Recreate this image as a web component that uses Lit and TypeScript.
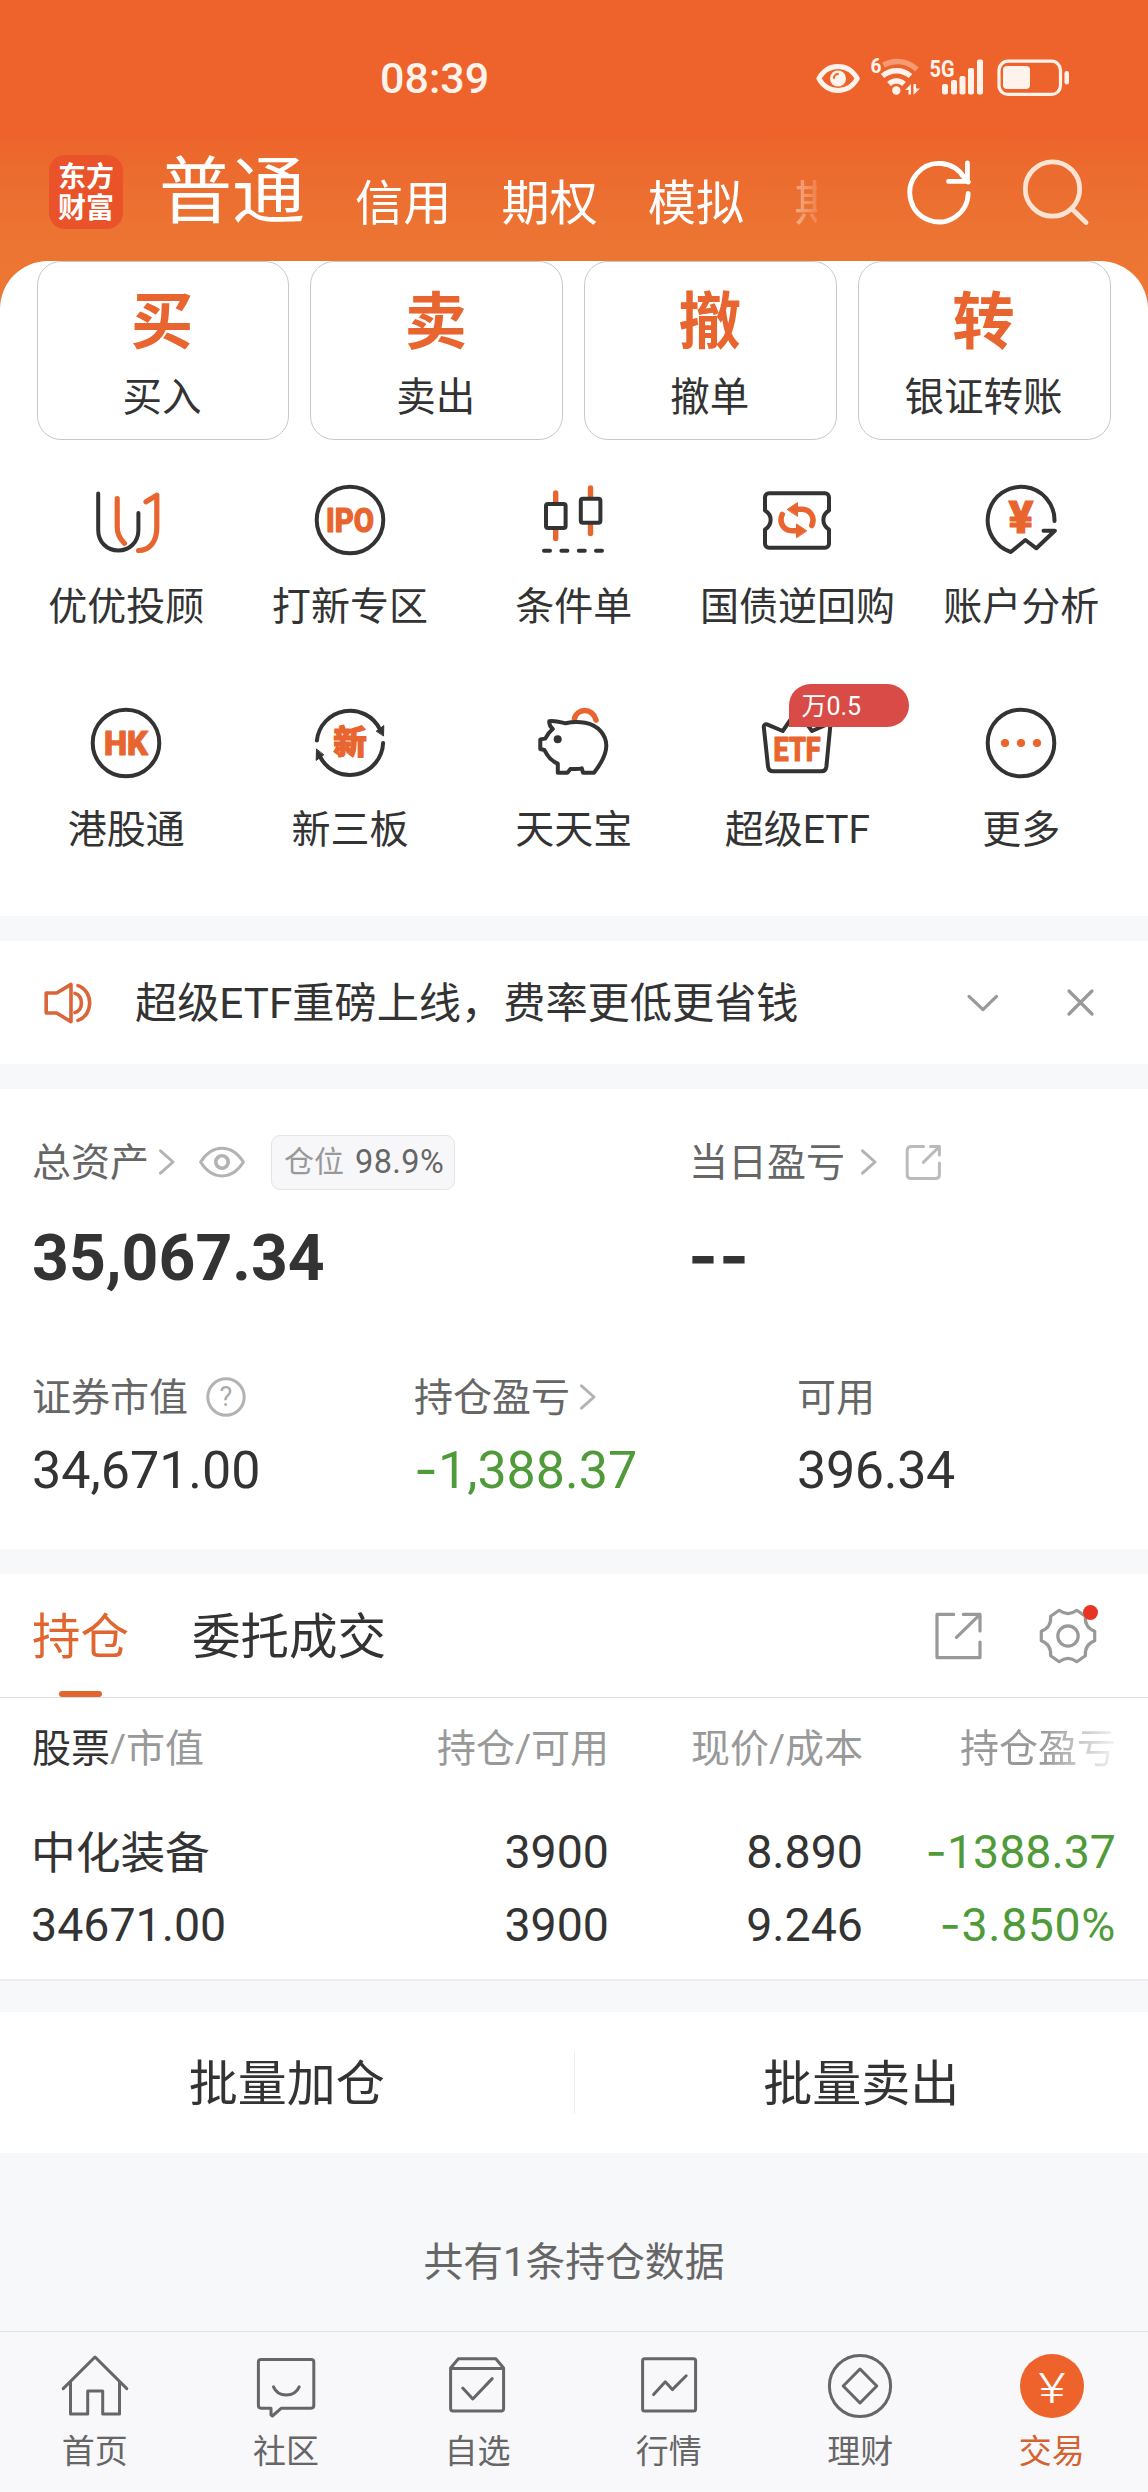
import { LitElement, html, svg, css, nothing } from "lit";
import { customElement, property } from "lit/decorators.js";
import { classMap } from "lit/directives/class-map.js";

const DARK = "#333";
const ORANGE = "#e9652f";
const ICON_FONT = `Roboto, "Noto Sans CJK SC", sans-serif`;

const glyph = (text: string, baseline: number, size: number, width: number, weight = 800, fill = ORANGE, edge = 1.2) => svg`
  <text x="36" y=${baseline} text-anchor="middle" font-family=${ICON_FONT} font-size=${size} stroke=${edge ? fill : "none"} stroke-width=${edge}
    font-weight=${weight} fill=${fill} textLength=${width} lengthAdjust="spacingAndGlyphs">${text}</text>`;

const icons: Record<string, unknown> = {
  advisor: svg`
    <path d="M8.2 9.5V46C8.2 58 17 66.5 28.3 66.5S48.4 58 48.4 46V29" stroke=${DARK}/>
    <path d="M27.2 14.5V43C27.2 50 30 55 34.5 59.3M56 17.8L66.8 11.2V44C66.8 57 60 66.5 48.6 66.5" stroke=${ORANGE} stroke-width="5.2"/>`,
  ipo: svg`<circle cx="36" cy="36" r="33.3" stroke=${DARK}/>${glyph("IPO", 47.6, 32.6, 48)}`,
  candles: svg`
    <path d="M17.7 9V18M17.7 46V54.5M52.5 4V13M52.5 41V49.5" stroke=${ORANGE} stroke-width="5.4"/>
    <rect x="8" y="20" width="19.6" height="24" rx="2" stroke=${DARK}/>
    <rect x="42.8" y="14.8" width="19.6" height="24" rx="2" stroke=${DARK}/>
    <path d="M6 66.7H12M23.4 66.7H29.4M40.8 66.7H46.8M58 66.7H64" stroke=${DARK}/>`,
  repo: svg`
    <path d="M8 9.3H64A4 4 0 0 1 68 13.3V26.5C60.5 31 60.5 41 68 45.5V59.7A4 4 0 0 1 64 63.7H8A4 4 0 0 1 4 59.7V45.5C11.5 41 11.5 31 4 26.5V13.3A4 4 0 0 1 8 9.3Z" stroke=${DARK}/>
    <g stroke=${ORANGE} stroke-width="5.6">
      <path d="M36 25.3H41C49 25.3 54.5 33 50.8 41.5"/><path d="M36 46.7H31C23 46.7 17.5 39 21.2 30.5"/>
    </g>
    <path d="M26.5 25.3L36.5 18.6V32ZM45.5 46.7L35.5 40V53.4Z" fill=${ORANGE} stroke=${ORANGE} stroke-width="1"/>`,
  account: svg`
    <path d="M69.5 37A33.4 33.4 0 1 0 25.8 68L40.4 56L51.4 64.3L69.8 46.7H58.5" stroke=${DARK}/>
    ${glyph("¥", 48.6, 43.5, 25)}`,
  hk: svg`<circle cx="36" cy="36" r="33.3" stroke=${DARK}/>${glyph("HK", 47.6, 32.6, 44)}`,
  neeq: svg`
    <path d="M2.9 33.5A33.3 33.3 0 0 1 66 22.5M69.1 36A33.3 33.3 0 0 1 6 49.5" stroke=${DARK}/>
    <path d="M62.5 24L69.8 18.6L69.5 28.6ZM9.5 48L2.2 53.4L2.5 42.4Z" fill=${DARK} stroke=${DARK} stroke-width="1"/>
    ${glyph("新", 47.4, 33, 33.5)}`,
  piggy: svg`
    <path d="M36.5 11.5C39 1.5 54 -.5 58 13" stroke=${ORANGE} stroke-width="5.6"/>
    <path d="M11.3 14.2C16 13 22 15 27.6 16.3C33 15 40 14.6 47 15.7C60 18 68.5 28 68.3 39C68.2 49 62 58 56 65.7H45L43.8 61.3C40 62.4 36 61.6 32.4 62L29.4 65.7H19.8V56.6C15 54.6 11.5 51.6 9 47.4L6.4 43L2.3 42V32.4L7.2 31.6C9 28 11 25 14.8 22C12.5 20 11 17.5 11.3 14.2Z" stroke=${DARK} fill="#fff"/>
    <circle cx="19.7" cy="32.3" r="4" fill=${DARK} stroke="none"/>`,
  etf: svg`
    <path d="M2.8 20A2.4 2.4 0 0 1 6 17.4L21.7 24L32.5 8.5Q36 4 39.5 8.5L51 24L66 17.4A2.4 2.4 0 0 1 69.2 20L65.4 59.5Q64.8 64.3 60.5 64.3H12.2Q7.6 64.3 7 59.5Z" stroke=${DARK}/>
    ${glyph("ETF", 54.2, 32.4, 47)}`,
  more: svg`<circle cx="36" cy="36" r="33.3" stroke=${DARK}/>
    <g fill=${ORANGE} stroke="none"><circle cx="20" cy="36" r="4.1"/><circle cx="36" cy="36" r="4.1"/><circle cx="52" cy="36" r="4.1"/></g>`,
  home: svg`<path d="M4.2 38.6L36 7L67.8 38.6M11.5 32V64H28.7V41H43.7V64H60.5V32"/>`,
  community: svg`<path d="M11 9.4H61.2Q63.8 9.4 63.8 12V55.6Q63.8 58.2 61.2 58.2H31.4L22.4 66L21 65V58.2H11Q8.4 58.2 8.4 55.6V12Q8.4 9.4 11 9.4Z"/><path d="M23.5 36.8C28 47.6 44.5 47.6 49.2 36.8"/>`,
  watch: svg`<path d="M9.6 18L17.4 8.8H54.8L62.6 18V58.6Q62.6 61 60.2 61H12Q9.6 61 9.6 58.6ZM9.6 18.4H62.6"/><path d="M21.7 38L31.8 49L51.2 28.6"/>`,
  market: svg`<rect x="9.6" y="8.8" width="53" height="52.2" rx="2"/><path d="M20.6 44.6L32.3 31.8L39.3 39.6L53.2 25.8"/>`,
  wealth: svg`<circle cx="36" cy="36" r="30.6"/><path d="M36 19L52.8 36L36 53L19.2 36Z"/>`,
  trade: svg`<circle cx="36" cy="36" r="32" fill="#ed632b" stroke="none"/>${glyph("¥", 52.6, 42, 27, 300, "#fff", 0)}`,
};

@customElement("line-icon")
class LineIcon extends LitElement {
  @property() name = "";
  @property({ type: Number }) stroke = 4;
  static styles = css`
    :host { display: block; width: 72px; height: 72px; }
    svg { display: block; width: 72px; height: 72px; overflow: visible; }
  `;
  render() {
    return html`<svg viewBox="0 0 72 72" fill="none" stroke="#666" stroke-width=${this.stroke}
      stroke-linecap="round" stroke-linejoin="round">${icons[this.name] ?? nothing}</svg>`;
  }
}

const tabs = ["信用", "期权", "模拟", "期货"];
const quick = [["买", "买入"], ["卖", "卖出"], ["撤", "撤单"], ["转", "银证转账"]];
const services: [string, string, string?][] = [
  ["advisor", "优优投顾"], ["ipo", "打新专区"], ["candles", "条件单"], ["repo", "国债逆回购"], ["account", "账户分析"],
  ["hk", "港股通"], ["neeq", "新三板"], ["piggy", "天天宝"], ["etf", "超级ETF", "万0.5"], ["more", "更多"],
];
const bottomNav = [["home", "首页"], ["community", "社区"], ["watch", "自选"], ["market", "行情"], ["wealth", "理财"], ["trade", "交易"]];

const chevron = (gap: string) => html`<svg class="chev ${gap}" width="16" height="26" viewBox="0 0 16 26"><path d="M1.5 1.8L14 13L1.5 24.2" /></svg>`;
const minus = (v: string) => html`<span class="neg">-</span>${v}`;

@customElement("app-root")
class AppRoot extends LitElement {
  static styles = css`
    :host { display: block; width: 1148px; height: 2492px; overflow: hidden; background: #f7f8fa; color: #333;
      font-family: Roboto, "Noto Sans CJK SC", sans-serif; }
    * { box-sizing: border-box; }
    svg { display: block; fill: none; stroke-linecap: round; stroke-linejoin: round; overflow: visible; flex: none; }
    .page { display: flex; flex-direction: column; height: 2492px; white-space: nowrap; }

    .top { background: linear-gradient(#ee632b 0, #ed632b 132px, #ec6a2e 165px, #ec7332 225px, #ed7834 310px); }
    .status { height: 155px; display: flex; align-items: center; padding-left: 380px; color: #fff3ec; }
    .clock { font-size: 43px; line-height: 60px; font-weight: 500; width: 436px; }
    .header { height: 106px; display: flex; align-items: flex-start; padding-left: 49px; }
    .logo { width: 74px; height: 74px; border-radius: 16px; background: #ea5329; color: #fff; font-weight: 700;
      font-size: 28px; line-height: 31px; text-align: center; padding-top: 7px; margin-right: 36px; }
    .tabs { display: flex; gap: 50px; width: 658px; height: 126px; margin-top: -20px; padding-top: 20px; overflow: hidden; color: #fff; line-height: 74px;
      -webkit-mask-image: linear-gradient(90deg, #000 588px, transparent 670px); mask-image: linear-gradient(90deg, #000 588px, transparent 670px); }
    .tab { font-size: 48.2px; padding-top: 12px; flex: none; }
    .tab.on { font-size: 73px; padding-top: 0; }
    .refresh { margin-left: 88px; }
    .search { margin-left: 46px; }

    .panel { height: 655px; background: #fff; border-radius: 48px 48px 0 0; }
    .quick { display: grid; grid-template-columns: repeat(4, 1fr); gap: 21px; padding: 0 37px 0 36.5px; }
    .card { height: 179px; border: 1px solid #c9c9c9; border-radius: 24px; text-align: center; padding: 30px 2px 0 0; }
    .big { font-size: 62.5px; line-height: 61px; font-weight: 700; color: #e9652f; }
    .cap { font-size: 39.5px; line-height: 44px; margin-top: 23px; }
    .services { display: grid; grid-template-columns: repeat(5, 1fr); row-gap: 77px; padding: 44px 15px 0 14.5px; }
    .service { display: flex; flex-direction: column; align-items: center; position: relative; }
    .name { font-size: 39px; line-height: 46px; margin-top: 28px; }
    .tag { position: absolute; left: calc(50% - 8px); top: -23px; width: 120px; height: 43px; padding-left: 12px;
      border-radius: 22px 22px 22px 0; background: #d94b46; color: #fff; font-size: 25px; line-height: 45px; }

    .notice { height: 123px; margin-top: 25px; background: #fff; display: flex; align-items: center; padding-left: 44px; }
    .msg { font-size: 42.2px; line-height: 60px; width: 875px; padding: 3px 0 0 43px; }
    .close { margin-left: 69px; }

    .assets { height: 460px; margin-top: 25px; background: #fff; padding: 43px 0 0 32px; }
    .line { display: flex; align-items: center; height: 60px; font-size: 39px; color: #666; }
    .lb { margin-top: -6px; }
    .chev { stroke: #b3b3b3; stroke-width: 3; }
    .col1 { width: 657px; display: flex; align-items: center; }
    .eye { margin-left: 24px; }
    .pos { height: 55px; width: 184px; margin-left: 26px; padding-left: 12px; background: #f7f7fa; border: 1px solid #e4e4e6;
      border-radius: 9px; display: flex; align-items: center; font-size: 30px; gap: 11px; color: #999; }
    .pos b { font-weight: 400; font-size: 32.5px; color: #666; letter-spacing: .4px; }
    .chev.near { margin-left: 10px; }
    .chev.far { margin-left: 16px; }
    .share-s { margin-left: 28px; }
    .totals { display: flex; height: 76px; margin-top: 28px; font-size: 64.3px; line-height: 76px; font-weight: 700; }
    .total { width: 656px; }
    .dash { font-family: Inter, sans-serif; font-size: 64px; margin-top: -2px; font-weight: 700; letter-spacing: 1px; }
    .stats { display: grid; grid-template-columns: 382px 383px 1fr; margin-top: 71px; }
    .help { margin-left: 18px; }
    .val { font-size: 52px; line-height: 64px; margin-top: 12px; }
    .val.last { letter-spacing: -.3px; }
    .green { color: #4f9b39; }
    .neg { font-family: Inter, sans-serif; line-height: 1; }

    .hold { margin-top: 25px; background: #fff; height: 407px; border-bottom: 2px solid #ebedf0; }
    .bar { height: 124px; border-bottom: 1px solid #dcdcdc; display: flex; align-items: center; padding-left: 32px; font-size: 48.5px; }
    .seg { height: 123px; line-height: 127px; margin-right: 63px; position: relative; }
    .seg.on { color: #e0652f; }
    .seg.on::after { content: ""; position: absolute; left: 27px; bottom: 0; width: 43px; height: 6px; border-radius: 3px; background: #e0652f; }
    .share-l { margin-left: auto; margin-right: 55px; }
    .gearbox { width: 60px; height: 60px; margin-right: 50px; position: relative; }
    .dot { position: absolute; right: 0; top: -1px; width: 15px; height: 15px; border-radius: 50%; background: #e93323; }
    .row { display: grid; grid-template-columns: 300px 277px 254px 253px; padding-left: 32px; text-align: right; }
    .row > .l { text-align: left; }
    .heads { font-size: 39px; line-height: 60px; color: #999; padding-top: 21px; }
    .heads b { font-weight: 400; color: #333; }
    .fade { -webkit-mask-image: linear-gradient(90deg, #000 180px, transparent 262px); mask-image: linear-gradient(90deg, #000 180px, transparent 262px); }
    .data { font-size: 46.5px; line-height: 73px; padding-top: 37px; grid-auto-rows: 73px; }
    .data .l { margin-left: -1px; }
    .stock { font-size: 44.7px; line-height: 76px; }
    .pct { letter-spacing: .6px; }

    .batch { height: 141px; margin-top: 31px; background: #fff; display: flex; font-size: 49px; line-height: 145px; text-align: center; align-items: center; }
    .batch div { flex: 1; height: 141px; }
    .batch i { width: 1px; height: 61px; background: #ededed; }
    .count { font-size: 39.8px; line-height: 60px; color: #666; text-align: center; padding-top: 80px; flex: 1; }
    .nav { height: 161px; border-top: 1px solid #e2e2e4; background: #f8f8fb; display: grid; grid-template-columns: repeat(6, 191.4px); padding: 18px 0 0; margin-left: -1px; width: 1149px; }
    .item { display: flex; flex-direction: column; align-items: center; font-size: 33px; line-height: 40px; color: #666; }
    .item span { margin-top: 10px; }
    .item.on { color: #d4632f; }
  `;

  private statusIcons() {
    return html`<svg width="260" height="40" viewBox="816 58 260 40" stroke="#fff3ec">
      <path d="M818.8 78.5C828 62.5 848 62.5 857.4 78.5C848 94.5 828 94.5 818.8 78.5Z" stroke-width="4.8"/>
      <circle cx="838" cy="78.5" r="8" fill="#fff3ec" stroke="none"/><path d="M834 78a4 4 0 0 1 4-4" stroke="#ed632b" stroke-width="2"/>
      <text x="870.5" y="73" font-size="20.5" font-weight="700" textLength="11" lengthAdjust="spacingAndGlyphs" fill="#fff3ec" stroke="none">6</text>
      <g stroke-width="5.4" stroke-linecap="butt">
        <path d="M883.5 65C893 60 906 59.5 917 69.5" stroke="#f59a72"/>
        <path d="M882.5 76C891 69 902 69 910.5 76M889 84C893 80 900 80 904 84"/>
      </g>
      <circle cx="896.3" cy="90.5" r="4.2" fill="#fff3ec" stroke="none"/>
      <path d="M905 90L911 84V94.5H908.5V90ZM913.5 84H916V88.5L920 88.5L914 94.5H913.5Z" fill="#fff3ec" stroke="none"/>
      <text x="929.5" y="76.6" font-size="24.5" font-weight="700" textLength="25" lengthAdjust="spacingAndGlyphs" fill="#fff3ec" stroke="none">5G</text>
      <g fill="#fff3ec" stroke="none">
        <rect x="942" y="84" width="6" height="10.5" rx="2"/><rect x="951" y="80" width="6" height="14.5" rx="2"/>
        <rect x="959.5" y="76" width="6" height="18.5" rx="2"/><rect x="968" y="68" width="6" height="26.5" rx="2"/><rect x="977" y="59.5" width="6" height="35" rx="2"/>
        <rect x="1003" y="66" width="27" height="23" rx="4"/><rect x="1064.5" y="71" width="4.5" height="13.5" rx="2.2"/>
      </g>
      <rect x="999" y="61.2" width="61.5" height="33.2" rx="9" stroke-width="3.2"/>
    </svg>`;
  }

  render() {
    return html`<div class="page">
      <div class="top">
        <div class="status"><div class="clock">08:39</div>${this.statusIcons()}</div>
        <div class="header">
          <div class="logo">东方<br />财富</div>
          <div class="tabs"><div class="tab on">普通</div>${tabs.map((t) => html`<div class="tab">${t}</div>`)}</div>
          <svg class="refresh" width="72" height="74" viewBox="905 155 72 74" stroke="#fff" stroke-width="4.8" stroke-linecap="butt" stroke-linejoin="miter">
            <path d="M968.2 193.5A29.2 29.2 0 1 1 964 177.5L968.4 182"/><path d="M967.4 163V181.4H948.5" />
          </svg>
          <svg class="search" width="72" height="74" viewBox="1023.5 155 72 74" stroke="#fde3d3" stroke-width="4.8" stroke-linecap="butt">
            <circle cx="1053" cy="189" r="27.2"/><path d="M1072 208.5L1086.5 222.5"/>
          </svg>
        </div>
        <div class="panel">
          <div class="quick">${quick.map(([a, b]) => html`<div class="card"><div class="big">${a}</div><div class="cap">${b}</div></div>`)}</div>
          <div class="services">${services.map(([icon, name, tag]) => html`<div class="service">
            <line-icon name=${icon}></line-icon><div class="name">${name}</div>${tag ? html`<div class="tag">${tag}</div>` : nothing}</div>`)}
          </div>
        </div>
      </div>

      <div class="notice">
        <svg width="48" height="42" viewBox="0 0 48 42" stroke="#d9663a" stroke-width="3.6">
          <path d="M2.2 11H12.7L27 2.4V39.8L12.7 31H2.2Z"/><path d="M31 11.4C39.5 14 39.5 28 31 30.6M34 3.6C49.5 9 49.5 33 34 38.4"/>
        </svg>
        <div class="msg">超级ETF重磅上线，费率更低更省钱</div>
        <svg width="31" height="18" viewBox="0 0 31 18" stroke="#999" stroke-width="3.2"><path d="M2 2.4L16 15.6L29.5 2.4"/></svg>
        <svg class="close" width="27" height="27" viewBox="0 0 27 27" stroke="#999" stroke-width="3.2"><path d="M2 2L25 25M25 2L2 25"/></svg>
      </div>

      <div class="assets">
        <div class="line">
          <div class="col1"><span class="lb">总资产</span>${chevron("near")}
            <svg class="eye" width="46" height="32" viewBox="0 0 46 32" stroke="#b3b3b3" stroke-width="3"><path d="M1.6 16C13 -2.5 33 -2.5 44.4 16C33 34.5 13 34.5 1.6 16Z"/><circle cx="23" cy="16" r="6.2" stroke-width="3.6"/></svg>
            <div class="pos"><span class="lb">仓位</span><b>98.9%</b></div>
          </div>
          <span class="lb">当日盈亏</span>${chevron("far")}
          <svg class="share-s" width="36" height="36" viewBox="0 0 36 36" stroke="#bbb" stroke-width="3"><path d="M18.5 2.5H6.2Q2.2 2.5 2.2 6.5V30.4Q2.2 34.4 6.2 34.4H30.4Q34.4 34.4 34.4 30.4V19M25.5 2.5H34.4V11M34 3L18.3 18.4"/></svg>
        </div>
        <div class="totals"><div class="total">35,067.34</div><div class="dash">--</div></div>
        <div class="stats">
          <div class="stat"><div class="line"><span class="lb">证券市值</span><svg class="help" width="40" height="40" viewBox="0 0 40 40" stroke="#b3b3b3" stroke-width="3"><circle cx="20" cy="20" r="18.2"/><text x="20" y="29.4" text-anchor="middle" font-size="27" fill="#aaa" stroke="none">?</text></svg></div><div class="val">34,671.00</div></div>
          <div class="stat"><div class="line"><span class="lb">持仓盈亏</span>${chevron("near")}</div><div class="val green">${minus("1,388.37")}</div></div>
          <div class="stat"><div class="line"><span class="lb">可用</span></div><div class="val last">396.34</div></div>
        </div>
      </div>

      <div class="hold">
        <div class="bar">
          <div class="seg on">持仓</div><div class="seg">委托成交</div>
          <svg class="share-l" width="48" height="48" viewBox="0 0 48 48" stroke="#999" stroke-width="3.2"><path d="M18.7 2.4H2V45.6H45V30M28.3 2.4H45V19M45 2.4L21.5 25.4"/></svg>
          <div class="gearbox"><svg width="60" height="60" viewBox="0 0 60 60" stroke="#999" stroke-width="3.2">
            <path d="M12.6 10.2L21.2 4.3Q30 11 38.8 4.3L47.4 10.2Q46.4 21.5 56.7 25.3V34.7Q46.4 38.5 47.4 49.8L38.8 55.7Q30 49 21.2 55.7L12.6 49.8Q13.6 38.5 3.3 34.7V25.3Q13.6 21.5 12.6 10.2Z"/><circle cx="30" cy="30" r="10.2"/></svg>
            <div class="dot"></div></div>
        </div>
        <div class="row heads"><div class="l"><b>股票</b>/市值</div><div>持仓/可用</div><div>现价/成本</div><div class="fade">持仓盈亏</div></div>
        <div class="row data">
          <div class="l stock">中化装备</div><div>3900</div><div>8.890</div><div class="green">${minus("1388.37")}</div>
          <div class="l">34671.00</div><div>3900</div><div>9.246</div><div class="green pct">${minus("3.850%")}</div>
        </div>
      </div>

      <div class="batch"><div>批量加仓</div><i></i><div>批量卖出</div></div>
      <div class="count">共有1条持仓数据</div>
      <div class="nav">${bottomNav.map(([icon, label]) => html`<div class=${classMap({ item: true, on: icon === "trade" })}>
        <line-icon name=${icon} .stroke=${3}></line-icon><span>${label}</span></div>`)}</div>
    </div>`;
  }
}
